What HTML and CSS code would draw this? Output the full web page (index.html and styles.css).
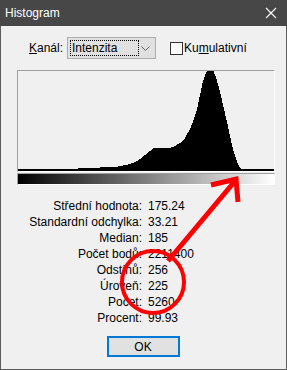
FILE: index.html
```html
<!DOCTYPE HTML>
<html lang="cs">
<head>
<meta charset="utf-8"/>
<title>Histogram</title>
<link rel="stylesheet" href="styles.css">
</head>
<body>
<div class="window">
  <div class="titlebar">
    <span class="title">Histogram</span>
    <svg class="close" width="12" height="12" viewBox="0 0 12 12">
      <path d="M1 1 L11 11 M11 1 L1 11" stroke="#fff" stroke-width="1.1" fill="none"/>
    </svg>
  </div>

  <div class="content">
    <div class="channel-row">
      <span class="lbl"><u>K</u>anál:</span>
      <div class="combo">
        <span class="combo-text">Intenzita</span>
        <svg class="chevron" width="9" height="5" viewBox="0 0 9 5">
          <path d="M0.5 0.5 L4.5 4.5 L8.5 0.5" stroke="#606060" stroke-width="1" fill="none"/>
        </svg>
      </div>
      <span class="check"><span class="box"></span>Ku<u>m</u>ulativní</span>
    </div>

    <div class="hist">
      <svg width="256" height="100" viewBox="0 0 256 100" shape-rendering="crispEdges">
        <polygon fill="#000" points="60,98 60,97 82,96.5 97,96 102,95 108,94 115,92 119,90 122,88 127,84 132,80 135,77 142,77 152,77 157,75 162,72 167,67 172,58 176,48 179,38 182,24 185,10 188,2 190,-1 195,-1 198,6 202,21 206,38 209,51 212,65 215,78 218,88 220,93 223,98"/>
        <rect x="0" y="98" width="256" height="2" fill="#000"/>
      </svg>
    </div>
    <div class="ramp"></div>

    <div class="stats">
      <span class="k">Střední hodnota:</span><span class="v">175.24</span>
      <span class="k">Standardní odchylka:</span><span class="v">33.21</span>
      <span class="k">Median:</span><span class="v">185</span>
      <span class="k">Počet bodů:</span><span class="v">2211400</span>
      <span class="k">Odstínů:</span><span class="v">256</span>
      <span class="k">Úroveň:</span><span class="v">225</span>
      <span class="k">Počet:</span><span class="v">5260</span>
      <span class="k">Procent:</span><span class="v">99.93</span>
    </div>

    <div class="actions">
      <button class="ok">OK</button>
    </div>
  </div>

  <!-- red markup drawn over the dialog -->
  <svg class="markup" width="287" height="370" viewBox="0 0 287 370">
    <ellipse cx="153" cy="282" rx="31" ry="31" fill="none" stroke="#f00" stroke-width="4"/>
    <line x1="168" y1="261" x2="235" y2="181" stroke="#f00" stroke-width="5"/>
    <polyline points="211,185 236,179 238,202" fill="none" stroke="#f00" stroke-width="5" stroke-linejoin="miter"/>
  </svg>
</div>
</body>
</html>
```

FILE: styles.css
```css
html, body { margin: 0; padding: 0; }

body { font-family: "Liberation Sans", Arial, sans-serif; font-size: 12px;
       color: #000; background: #f0f0f0; }

.window {
  position: relative;
  width: 287px;
  height: 370px;
  box-sizing: border-box;
  border: 1px solid #5c5c5c;
  border-top: none;
  background: #f0f0f0;
}

.titlebar {
  height: 26px;
  margin: 0 -1px;
  background: #474747;
  color: #fff;
  display: flex;
  align-items: center;
  justify-content: space-between;
  padding: 0 10px 0 5px;
}

.title { font-size: 12px; }

.close { display: block; }

.channel-row {
  display: flex;
  align-items: center;
  height: 22px;
  margin-top: 11px;
  padding-left: 28px;
}

.lbl { width: 38px; }

.combo {
  width: 89px;
  height: 22px;
  box-sizing: border-box;
  border: 1px solid #adadad;
  background: #e1e1e1;
  display: flex;
  align-items: center;
  justify-content: space-between;
  padding: 0 5px 0 2px;
}

.combo-text {
  border: 1px dotted #000;
  width: 66px;
  line-height: 14px;
  padding-left: 1px;
}

.check {
  display: flex;
  align-items: center;
  margin-left: 14px;
}

.box {
  width: 13px;
  height: 13px;
  box-sizing: border-box;
  border: 1px solid #333;
  background: #fff;
  margin-right: 1px;
}

.hist {
  margin: 11px 0 0 16px;
  width: 256px;
  height: 100px;
  border-top: 1px solid #a0a0a0;
  border-left: 1px solid #a0a0a0;
  border-right: 1px solid #fff;
  border-bottom: 1px solid #fff;
}

.hist svg { display: block; }

.ramp {
  margin: 1px 0 0 16px;
  width: 256px;
  height: 10px;
  border-top: 1px solid #a0a0a0;
  border-left: 1px solid #a0a0a0;
  border-right: 1px solid #fff;
  border-bottom: 1px solid #fff;
  background: linear-gradient(to right, #000, #fff);
}

.stats {
  display: grid;
  grid-template-columns: 141px auto;
  column-gap: 6px;
  margin-top: 13px;
  line-height: 16px;
}

.k { text-align: right; }

.actions {
  display: flex;
  justify-content: center;
  margin-top: 10px;
}

.ok {
  width: 73px;
  height: 21px;
  box-sizing: border-box;
  border: 2px solid #0078d7;
  background: #e1e1e1;
  font-family: inherit;
  font-size: 12px;
  color: #000;
  padding: 0;
  margin-left: -1px;
}

.markup {
  position: absolute;
  left: -1px;
  top: 0;
  pointer-events: none;
}
```
